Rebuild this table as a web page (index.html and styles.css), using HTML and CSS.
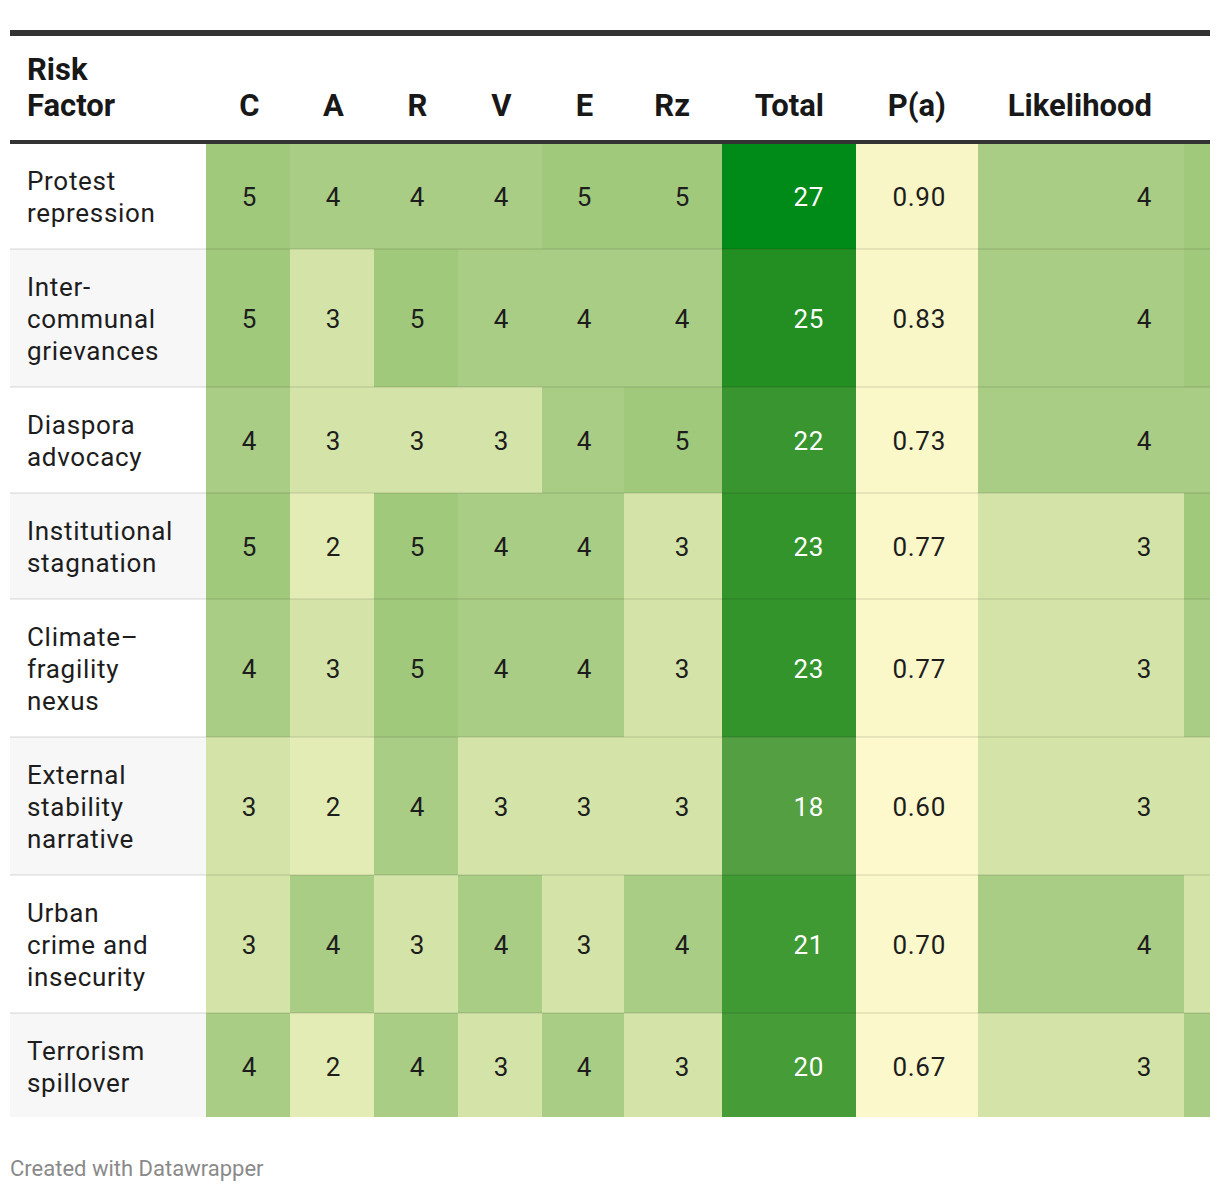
FILE: index.html
```html
<!DOCTYPE html>
<html lang="en">
<head>
<meta charset="utf-8">
<title>Risk Factor Table</title>
<link rel="stylesheet" href="styles.css">
</head>
<body>
<div class="chart">
  <table class="heat">
    <colgroup>
      <col class="w-name"><col class="w-s"><col class="w-s"><col class="w-s"><col class="w-s"><col class="w-e"><col class="w-rz"><col class="w-total"><col class="w-p"><col class="w-lik"><col class="w-last">
    </colgroup>
    <thead>
      <tr>
        <th class="left">Risk<br>Factor</th>
        <th class="mid">C</th>
        <th class="mid">A</th>
        <th class="mid">R</th>
        <th class="mid">V</th>
        <th class="mid">E</th>
        <th class="right">Rz</th>
        <th class="right">Total</th>
        <th class="right">P(a)</th>
        <th class="right">Likelihood</th>
        <th class="right"></th>
      </tr>
    </thead>
    <tbody>
      <tr>
        <td class="name">Protest<br>repression</td>
        <td class="mid v5">5</td><td class="mid v4">4</td><td class="mid v4">4</td><td class="mid v4">4</td><td class="mid v5">5</td>
        <td class="right v5">5</td><td class="right tot t27">27</td><td class="right p90">0.90</td><td class="right v4">4</td><td class="v5"></td>
      </tr>
      <tr>
        <td class="name">Inter-<br>communal<br>grievances</td>
        <td class="mid v5">5</td><td class="mid v3">3</td><td class="mid v5">5</td><td class="mid v4">4</td><td class="mid v4">4</td>
        <td class="right v4">4</td><td class="right tot t25">25</td><td class="right p83">0.83</td><td class="right v4">4</td><td class="v5"></td>
      </tr>
      <tr>
        <td class="name">Diaspora<br>advocacy</td>
        <td class="mid v4">4</td><td class="mid v3">3</td><td class="mid v3">3</td><td class="mid v3">3</td><td class="mid v4">4</td>
        <td class="right v5">5</td><td class="right tot t22">22</td><td class="right p73">0.73</td><td class="right v4">4</td><td class="v4"></td>
      </tr>
      <tr>
        <td class="name">Institutional<br>stagnation</td>
        <td class="mid v5">5</td><td class="mid v2">2</td><td class="mid v5">5</td><td class="mid v4">4</td><td class="mid v4">4</td>
        <td class="right v3">3</td><td class="right tot t23">23</td><td class="right p77">0.77</td><td class="right v3">3</td><td class="v5"></td>
      </tr>
      <tr>
        <td class="name">Climate–<br>fragility<br>nexus</td>
        <td class="mid v4">4</td><td class="mid v3">3</td><td class="mid v5">5</td><td class="mid v4">4</td><td class="mid v4">4</td>
        <td class="right v3">3</td><td class="right tot t23">23</td><td class="right p77">0.77</td><td class="right v3">3</td><td class="v4"></td>
      </tr>
      <tr>
        <td class="name">External<br>stability<br>narrative</td>
        <td class="mid v3">3</td><td class="mid v2">2</td><td class="mid v4">4</td><td class="mid v3">3</td><td class="mid v3">3</td>
        <td class="right v3">3</td><td class="right tot t18">18</td><td class="right p60">0.60</td><td class="right v3">3</td><td class="v3"></td>
      </tr>
      <tr>
        <td class="name">Urban<br>crime and<br>insecurity</td>
        <td class="mid v3">3</td><td class="mid v4">4</td><td class="mid v3">3</td><td class="mid v4">4</td><td class="mid v3">3</td>
        <td class="right v4">4</td><td class="right tot t21">21</td><td class="right p70">0.70</td><td class="right v4">4</td><td class="v3"></td>
      </tr>
      <tr class="last">
        <td class="name">Terrorism<br>spillover</td>
        <td class="mid v4">4</td><td class="mid v2">2</td><td class="mid v4">4</td><td class="mid v3">3</td><td class="mid v4">4</td>
        <td class="right v3">3</td><td class="right tot t20">20</td><td class="right p67">0.67</td><td class="right v3">3</td><td class="v4"></td>
      </tr>
    </tbody>
  </table>
  <div class="footer">Created with Datawrapper</div>
</div>
</body>
</html>
```

FILE: styles.css
```css
html, body {
  margin: 0;
  padding: 0;
  background: #ffffff;
}

body {
  font-family: Roboto, "Liberation Sans", Arial, sans-serif;
  color: #1d1d1d;
}

.chart {
  padding: 30px 10px 0 10px;
}

.heat {
  width: 1200px;
  border-collapse: collapse;
  table-layout: fixed;
  border-top: 6px solid #333333;
}

.w-name { width: 196px; }
.w-s { width: 84px; }
.w-e { width: 82px; }
.w-rz { width: 98px; }
.w-total { width: 134px; }
.w-p { width: 122px; }
.w-lik { width: 206px; }
.w-last { width: 26px; }

.heat th {
  font-size: 31px;
  line-height: 36px;
  font-weight: 700;
  color: #181818;
  vertical-align: bottom;
  padding: 16px 0 16px 0;
  border-bottom: 4px solid #333333;
  white-space: nowrap;
}

.heat td {
  font-size: 26px;
  line-height: 32px;
  letter-spacing: 0.7px;
  padding: 21px 0 19px 0;
  border-bottom: 2px solid rgba(0, 0, 0, 0.075);
  vertical-align: middle;
}

.heat tr.last td {
  border-bottom: none;
  padding-bottom: 18px;
}

.heat th.left,
.heat td.name {
  text-align: left;
  padding-left: 17px;
}

.heat .mid {
  text-align: center;
  padding-left: 3px;
}

.heat .right {
  text-align: right;
  padding-right: 32px;
}

.heat th.right {
  padding-right: 32px;
}

.heat tbody tr:nth-child(even) td.name {
  background: #f7f7f7;
}

.v5 { background: #a1c97c; }
.v4 { background: #aacd85; }
.v3 { background: #d4e4a8; }
.v2 { background: #e4ecb6; }

.tot { color: #ffffff; }
.t27 { background: #008a17; }
.t25 { background: #238e22; }
.t23 { background: #33942c; }
.t22 { background: #39952f; }
.t21 { background: #409a33; }
.t20 { background: #469c36; }
.t18 { background: #549f42; }

.p90 { background: #f8f5c6; }
.p83 { background: #f9f6c8; }
.p77 { background: #faf7c9; }
.p73 { background: #faf7c9; }
.p70 { background: #fbf8cb; }
.p67 { background: #fbf8cb; }
.p60 { background: #fdf9cc; }

.footer {
  margin-top: 39px;
  font-size: 22px;
  line-height: 26px;
  color: #8a8a8a;
}
```
